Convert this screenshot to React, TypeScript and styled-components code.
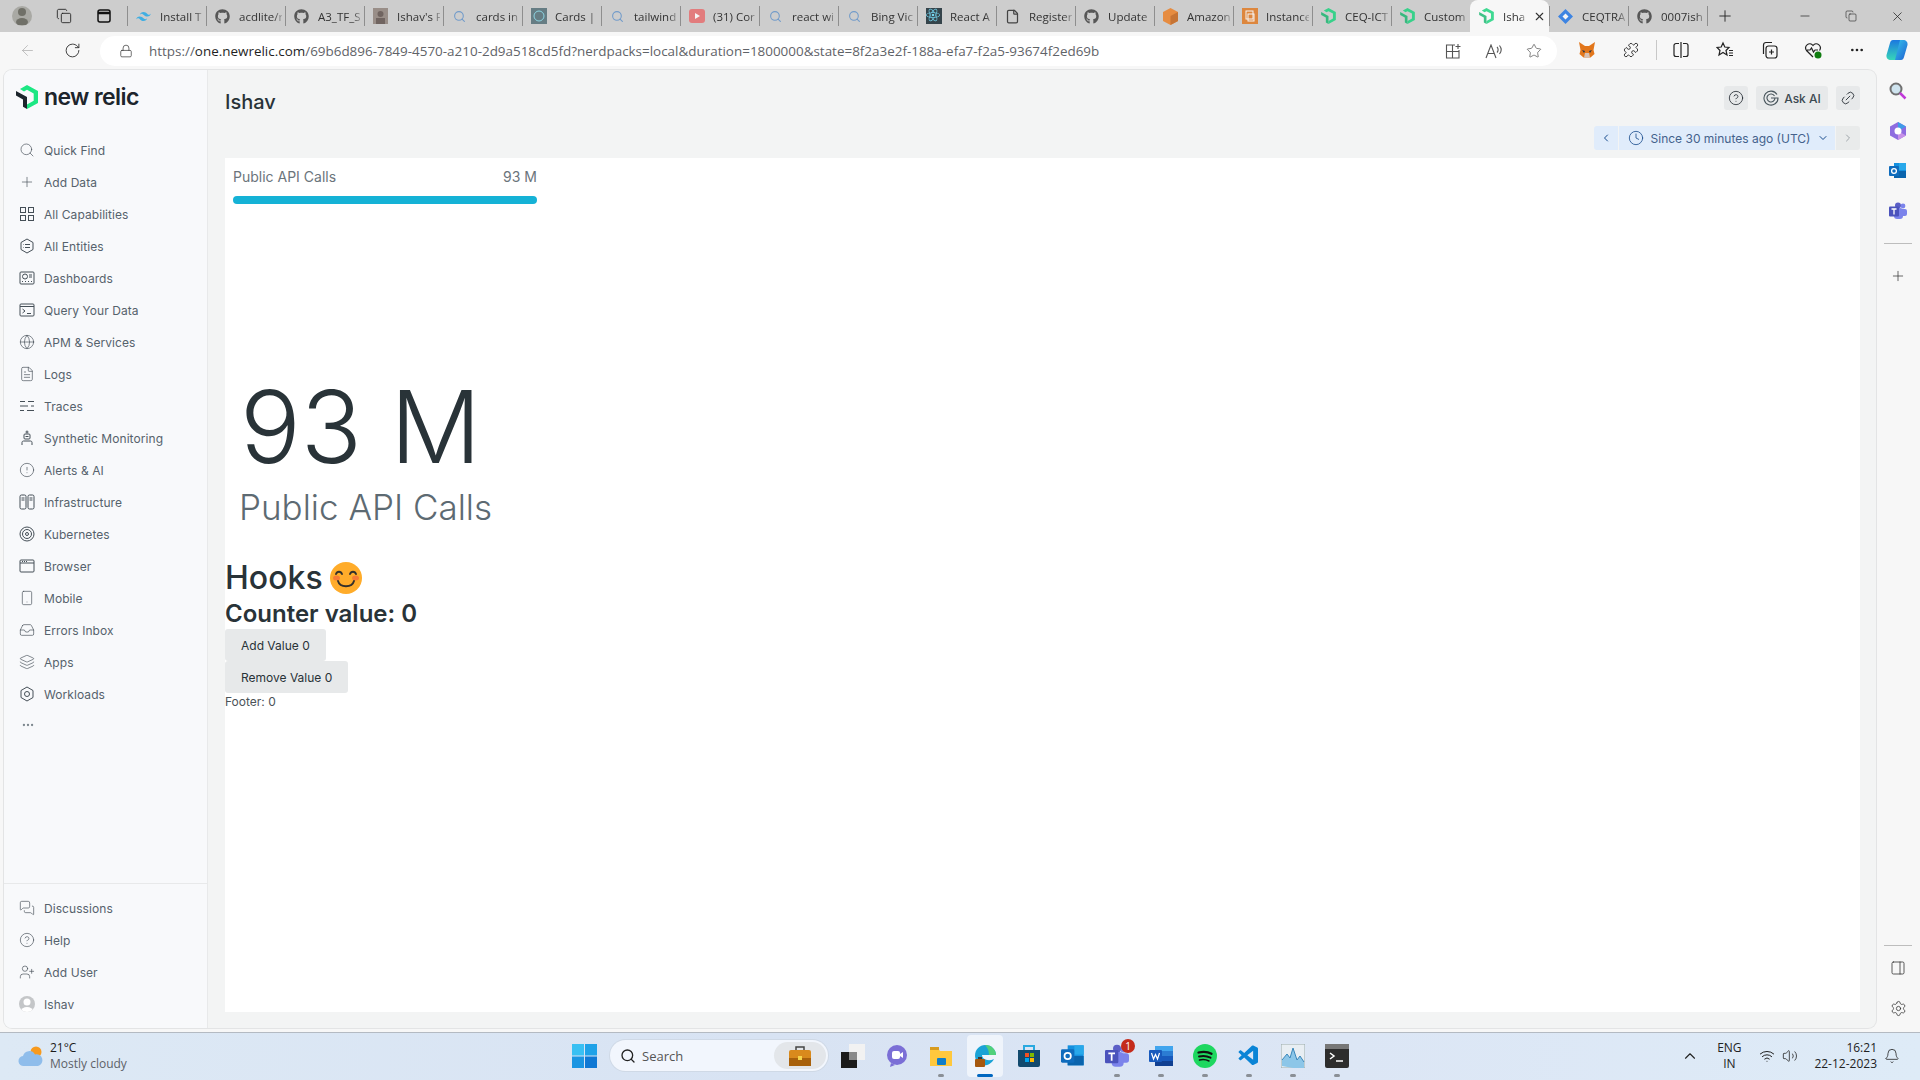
import { FC, ReactNode } from "react";
import styled, { createGlobalStyle } from "styled-components";
import {
  ArrowLeft, RotateCw, Lock, Star, Plus, Minus, Copy, X, Puzzle, MoreHorizontal, Search,
  CircleHelp, Link2, Clock, ChevronLeft, ChevronRight, ChevronDown, ChevronUp, Wifi, Volume2, Bell,
  Settings, PanelRight, Globe, FileText, CircleAlert, Smartphone, Inbox,
  Layers, MessagesSquare, UserPlus, File,
} from "lucide-react";
import { FaGithub } from "react-icons/fa";
import { SiTailwindcss, SiReact } from "react-icons/si";
import { VscVscode } from "react-icons/vsc";

const GlobalStyle = createGlobalStyle`
  html, body { margin: 0; padding: 0; width: 1920px; height: 1080px; overflow: hidden; }
  body { font-family: "Inter", "Liberation Sans", sans-serif; }
  * { box-sizing: border-box; }
`;

const Screen = styled.div`
  width: 1920px;
  height: 1080px;
  display: flex;
  flex-direction: column;
  background: #f7f7f7;
`;

/* browser tabs */
const TitleBar = styled.div`
  height: 32px;
  display: flex;
  align-items: stretch;
  background: #cdcdcd;
`;
const TitleStart = styled.div`
  width: 127px;
  display: flex;
  align-items: center;
  padding-left: 12px;
  gap: 24px;
  color: #222;
`;
const Profile = styled.div`
  width: 20px;
  height: 20px;
  border-radius: 50%;
  background: #a9a9a4;
  display: flex;
  align-items: center;
  justify-content: center;
`;
const TabStrip = styled.div`
  display: flex;
  align-items: stretch;
`;
const Tab = styled.div<{ $active?: boolean }>`
  width: 79px;
  display: flex;
  align-items: center;
  gap: 8px;
  padding: 0 3px 0 8px;
  font-family: "Open Sans", sans-serif;
  font-size: 11.5px;
  color: #333;
  white-space: nowrap;
  position: relative;
  background: ${(p) => (p.$active ? "#f7f7f7" : "transparent")};
  border-radius: ${(p) => (p.$active ? "8px 8px 0 0" : "0")};
  &::before {
    content: "";
    position: absolute;
    left: 0;
    top: 6px;
    bottom: 6px;
    width: 1px;
    background: ${(p) => (p.$active ? "transparent" : "#8e8e8e")};
  }
`;
const TabIcon = styled.span`
  flex: 0 0 17px;
  height: 17px;
  display: flex;
  align-items: center;
  justify-content: center;
  opacity: 0.8;
`;
const TabLabel = styled.span`
  flex: 1;
  min-width: 0;
  overflow: hidden;
  -webkit-mask-image: linear-gradient(90deg, #000 80%, rgba(0, 0, 0, 0.3));
  mask-image: linear-gradient(90deg, #000 80%, rgba(0, 0, 0, 0.3));
`;
const NewTab = styled.div`
  width: 34px;
  display: flex;
  align-items: center;
  justify-content: center;
  color: #222;
  border-left: 1px solid #8e8e8e;
  margin: 6px 0;
`;
const WindowControls = styled.div`
  margin-left: auto;
  display: flex;
  align-items: center;
  color: #222;
`;
const WindowButton = styled.div`
  width: 46px;
  display: flex;
  justify-content: center;
`;

/* address row */
const NavBar = styled.div`
  height: 36px;
  display: flex;
  align-items: center;
  background: #f7f7f7;
  color: #333;
`;
const NavButtons = styled.div`
  width: 100px;
  display: flex;
  align-items: center;
  padding-left: 19px;
  gap: 28px;
`;
const AddressPill = styled.div`
  width: 1457px;
  height: 30px;
  margin-top: 2px;
  border-radius: 15px;
  background: #fff;
  display: flex;
  align-items: center;
  padding: 0 15px 0 19px;
  gap: 16px;
`;
const UrlText = styled.span`
  flex: 1;
  font-family: "Open Sans", sans-serif;
  font-size: 13.45px;
  color: #5f6368;
  white-space: nowrap;
`;
const UrlHost = styled.span`
  color: #1f1f1f;
`;
const PillIcons = styled.div`
  display: flex;
  align-items: center;
  gap: 24px;
  color: #555;
`;
const Extensions = styled.div`
  flex: 1;
  display: flex;
  align-items: center;
  padding-left: 8px;
  color: #222;
`;
const ExtensionSlot = styled.span`
  flex: 0 0 44px;
  display: flex;
  justify-content: center;
`;
const CopilotSlot = styled.span`
  margin-left: 6px;
  display: flex;
`;
const VerticalRule = styled.span`
  flex: 0 0 1px;
  width: 1px;
  height: 20px;
  background: #c8c8c8;
  margin: 0 2px 0 3px;
`;

/* page */
const Workspace = styled.div`
  flex: 1;
  display: flex;
  min-height: 0;
  padding: 2px 0 4px 4px;
`;
const Page = styled.div`
  flex: 1;
  display: flex;
  min-width: 0;
  border-radius: 8px;
  overflow: hidden;
  background: #f3f4f4;
  box-shadow: 0 0 0 1px #e3e4e5;
`;
const Sidebar = styled.nav`
  width: 204px;
  flex-shrink: 0;
  display: flex;
  flex-direction: column;
  background: #f8f9fb;
  border-right: 1px solid #e8e9ea;
`;
const Brand = styled.div`
  height: 64px;
  display: flex;
  align-items: flex-start;
  padding: 15px 0 0 12px;
  gap: 6px;
`;
const BrandName = styled.span`
  font-size: 23px;
  line-height: 24px;
  font-weight: 600;
  letter-spacing: -0.6px;
  color: #1d252c;
`;
const NavList = styled.div`
  display: flex;
  flex-direction: column;
  padding-left: 15px;
`;
const NavRow = styled.div`
  height: 32px;
  display: flex;
  align-items: center;
  gap: 9px;
  font-size: 12px;
  letter-spacing: 0.07px;
  color: #56626c;
  svg {
    color: #454f57;
    flex-shrink: 0;
  }
`;
const MoreDots = styled.div`
  padding: 6px 0 0 2px;
  color: #7d878e;
  height: 32px;
`;
const BottomNav = styled(NavList)`
  margin-top: auto;
  border-top: 1px solid #e8e9ea;
  padding-top: 8px;
  padding-bottom: 8px;
`;
const Avatar = styled.span`
  width: 16px;
  height: 16px;
  border-radius: 50%;
  background: #c4c6c8;
  display: flex;
  align-items: center;
  justify-content: center;
  overflow: hidden;
`;
const Main = styled.main`
  flex: 1;
  min-width: 0;
  display: flex;
  flex-direction: column;
  padding: 0 16px 16px 17px;
`;
const PageHeader = styled.header`
  height: 40px;
  margin-top: 16px;
  display: flex;
  align-items: flex-start;
  justify-content: space-between;
`;
const PageTitle = styled.h2`
  margin: 4px 0 0;
  font-size: 20px;
  line-height: 24px;
  font-weight: 500;
  color: #293338;
`;
const HeaderActions = styled.div`
  display: flex;
  gap: 8px;
`;
const ActionButton = styled.div<{ $wide?: boolean }>`
  height: 24px;
  width: ${(p) => (p.$wide ? "72px" : "24px")};
  border-radius: 3px;
  background: #e7e9ea;
  display: flex;
  align-items: center;
  justify-content: center;
  gap: 5px;
  font-size: 12px;
  font-weight: 500;
  color: #3c4a52;
`;
const TimeRow = styled.div`
  height: 24px;
  display: flex;
  justify-content: flex-end;
  gap: 1px;
`;
const TimeSegment = styled.div<{ $muted?: boolean; $main?: boolean; $round?: "left" | "right" }>`
  height: 24px;
  width: ${(p) => (p.$main ? "216px" : "24px")};
  display: flex;
  align-items: center;
  justify-content: center;
  gap: 7px;
  padding-left: ${(p) => (p.$main ? "3px" : "0")};
  background: ${(p) => (p.$muted ? "#e9ebeb" : "#e0ecfb")};
  color: ${(p) => (p.$muted ? "#9ea5aa" : "#164a8c")};
  border-radius: ${(p) => (p.$round === "left" ? "3px 0 0 3px" : p.$round === "right" ? "0 3px 3px 0" : "0")};
  font-size: 12px;
`;
const TimeLabel = styled.span`
  color: #44628c;
`;
const Panel = styled.section`
  flex: 1;
  margin-top: 8px;
  background: #fff;
`;
const BillboardHead = styled.div`
  width: 320px;
  padding: 10px 8px 0;
  display: flex;
  justify-content: space-between;
  font-size: 14px;
  line-height: 18px;
  color: #6b747b;
`;
const Bar = styled.div`
  width: 304px;
  height: 8px;
  margin: 10px 0 0 8px;
  border-radius: 4px;
  background: #15b2d6;
`;
const Billboard = styled.div`
  margin: 170px 0 0 15px;
`;
const BigValue = styled.div`
  font-size: 101px;
  line-height: 104px;
  font-weight: 300;
  color: #293338;
`;
const BigLabel = styled.div`
  margin: 7px 0 0 -1px;
  font-size: 35px;
  line-height: 44px;
  font-weight: 300;
  color: #5d6a72;
`;
const HooksTitle = styled.h1`
  margin: 30px 0 0;
  display: flex;
  align-items: center;
  gap: 6px;
  font-size: 32px;
  line-height: 38px;
  font-weight: 500;
  color: #293338;
`;
const CounterTitle = styled.h2`
  margin: 1px 0 0;
  font-size: 24px;
  line-height: 31px;
  font-weight: 600;
  color: #293338;
`;
const ButtonStack = styled.div`
  display: flex;
  flex-direction: column;
  align-items: flex-start;
`;
const GrayButton = styled.button`
  height: 32px;
  padding: 0 16px;
  border: 0;
  border-radius: 3px;
  background: #e7e9ea;
  font-family: inherit;
  font-size: 12px;
  color: #293338;
`;
const Footer = styled.div`
  margin-top: 1px;
  font-size: 12px;
  line-height: 16px;
  color: #4b5358;
`;

/* edge rail */
const Rail = styled.aside`
  width: 44px;
  flex-shrink: 0;
  display: flex;
  flex-direction: column;
  align-items: center;
  padding-top: 1px;
  color: #333;
`;
const RailSlot = styled.div`
  height: 40px;
  display: flex;
  align-items: center;
  justify-content: center;
`;
const RailDivider = styled.div<{ $tight?: boolean }>`
  width: 28px;
  height: 1px;
  margin: ${(p) => (p.$tight ? "0 0 2px" : "12px 0")};
  background: #bdbdbd;
`;
const RailBottom = styled.div`
  margin-top: auto;
  display: flex;
  flex-direction: column;
  align-items: center;
`;

/* taskbar */
const Taskbar = styled.footer`
  height: 48px;
  display: flex;
  align-items: center;
  padding-bottom: 2px;
  border-top: 1px solid #b4bac2;
  background: linear-gradient(90deg, #dde9f5, #d8e3f3 40%, #dce6f5 70%, #deebf7);
`;
const Weather = styled.div`
  width: 572px;
  display: flex;
  align-items: center;
  padding-left: 18px;
  gap: 6px;
  font-family: "Open Sans", sans-serif;
  font-size: 12px;
  line-height: 16px;
  color: #1b1b1b;
`;
const WeatherText = styled.span`
  color: #5d6268;
`;
const TaskCenter = styled.div`
  display: flex;
  align-items: center;
`;
const StartSlot = styled.div`
  width: 38px;
  display: flex;
`;
const SearchPill = styled.div`
  width: 218px;
  height: 31px;
  border-radius: 16px;
  background: #f2f6fd;
  box-shadow: 0 0 0 1px #cfd9e6;
  display: flex;
  align-items: center;
  padding: 0 2px 0 10px;
  gap: 6px;
  font-family: "Open Sans", sans-serif;
  font-size: 13px;
  color: #555;
`;
const SearchBadge = styled.span`
  margin-left: auto;
  width: 52px;
  height: 27px;
  border-radius: 14px;
  background: #e3e6ea;
  display: flex;
  align-items: center;
  justify-content: center;
`;
const TaskApps = styled.div`
  display: flex;
  margin-left: 3px;
`;
const TaskApp = styled.div<{ $active?: boolean; $running?: boolean }>`
  width: 44px;
  height: 42px;
  position: relative;
  display: flex;
  align-items: center;
  justify-content: center;
  &::before {
    content: "";
    position: absolute;
    left: 4px;
    right: 4px;
    top: 0;
    bottom: 0;
    border-radius: 4px;
    background: ${(p) => (p.$active ? "#eff4fb" : "transparent")};
  }
  &::after {
    content: "";
    position: absolute;
    left: 50%;
    bottom: 0;
    transform: translateX(-50%);
    width: ${(p) => (p.$active ? "16px" : "6px")};
    height: 3px;
    border-radius: 2px;
    background: ${(p) => (p.$active ? "#0067c0" : p.$running ? "#8a8f96" : "transparent")};
  }
  > * {
    position: relative;
  }
`;
const Badge = styled.span`
  position: absolute;
  top: 4px;
  right: 4px;
  width: 14px;
  height: 14px;
  border-radius: 50%;
  background: #c42b1c;
  color: #fff;
  font-size: 10px;
  line-height: 14px;
  text-align: center;
  font-family: "Open Sans", sans-serif;
`;
const Tray = styled.div`
  margin-left: auto;
  display: flex;
  align-items: center;
  color: #222;
  font-family: "Open Sans", sans-serif;
  font-size: 12px;
  line-height: 16px;
`;
const Lang = styled.div`
  width: 40px;
  margin: 0 10px 0 10px;
  text-align: center;
`;
const TrayIcons = styled.div`
  display: flex;
  gap: 7px;
  align-items: center;
`;
const ClockText = styled.div`
  margin-left: 16px;
  text-align: right;
  font-size: 12px;
`;
const BellSlot = styled.div`
  width: 43px;
  padding-right: 13px;
  display: flex;
  justify-content: center;
`;

const Line: FC<{ children: ReactNode; size?: number }> = ({ children, size = 16 }) => (
  <svg width={size} height={size} viewBox="0 0 16 16" fill="none" stroke="currentColor" strokeWidth={1}>
    {children}
  </svg>
);

const NrMark = () => (
  <svg width="22" height="24" viewBox="0 0 22 24">
    <path d="M4 3.900 11 0l11 6v12l-11 6v-4.600l6.700-3.700V8.400L11 4.700 8 6.400z" fill="#1ce783" />
    <path d="M0 6 11 12v12l-4-2.200v-7.400L0 10.600z" fill="#1d252c" />
  </svg>
);

const SmallMark = () => (
  <svg width="15" height="16" viewBox="0 0 22 24">
    <path d="M4 3.900 11 0l11 6v12l-11 6v-4.600l6.700-3.700V8.400L11 4.700 8 6.400z" fill="#12d27a" />
    <path d="M0 6 11 12v12l-4-2.200v-7.400L0 10.600z" fill="#12b56c" />
  </svg>
);

const Outlook: FC<{ size?: number }> = ({ size = 18 }) => (
  <svg width={size} height={size} viewBox="0 0 18 18">
    <rect x="5" y="1" width="12" height="15" fill="#1490df" />
    <rect x="10" y="1" width="7" height="7" fill="#28a8ea" />
    <rect x="5" y="9" width="12" height="7" fill="#0a64ad" />
    <rect x="0" y="4" width="10" height="10" rx="1" fill="#0f6cbd" />
    <circle cx="5" cy="9" r="2.400" fill="none" stroke="#fff" strokeWidth="1.300" />
  </svg>
);

const Teams: FC<{ size?: number }> = ({ size = 18 }) => (
  <svg width={size} height={size} viewBox="0 0 18 18">
    <circle cx="14" cy="4" r="2.400" fill="#7b83eb" />
    <rect x="10" y="7" width="8" height="7" rx="2" fill="#7b83eb" />
    <circle cx="9" cy="3.500" r="3" fill="#5b5fc7" />
    <rect x="5" y="6" width="9" height="11" rx="3" fill="#7b83eb" />
    <rect x="0" y="4.500" width="10" height="10" rx="1" fill="#4b53bc" />
    <path d="M2.500 7h5M5 7v5.500" stroke="#fff" strokeWidth="1.300" />
  </svg>
);

const Word = () => (
  <svg width="24" height="24" viewBox="0 0 24 24">
    <rect x="6" y="2" width="18" height="5" fill="#41a5ee" />
    <rect x="6" y="7" width="18" height="5" fill="#2b7cd3" />
    <rect x="6" y="12" width="18" height="5" fill="#185abd" />
    <rect x="6" y="17" width="18" height="5" fill="#103f91" />
    <rect x="0" y="6" width="13" height="12" rx="1" fill="#185abd" />
    <path d="M2.500 9 4.500 15 6.500 10.500 8.500 15 10.500 9" stroke="#fff" strokeWidth="1.200" fill="none" />
  </svg>
);

const Fox = () => (
  <svg width="18" height="18" viewBox="0 0 18 18">
    <path d="M1 1l6 4h4l6-4-1.500 8 1 4-4 3.500h-7L1.500 13l1-4z" fill="#e2761b" />
    <path d="M6 16.500 7 12h4l1 4.500z" fill="#d7c1b3" />
    <path d="M4 9l3 1-1 2zM14 9l-3 1 1 2z" fill="#233447" />
  </svg>
);

const CopilotMark = () => (
  <svg width="24" height="24" viewBox="0 0 24 24">
    <defs>
      <linearGradient id="copilotA" x1="0" y1="0" x2="0" y2="1">
        <stop offset="0" stopColor="#1b78e0" />
        <stop offset="1" stopColor="#37d6b8" />
      </linearGradient>
      <linearGradient id="copilotB" x1="0" y1="0" x2="1" y2="1">
        <stop offset="0" stopColor="#35c6ee" />
        <stop offset="1" stopColor="#1f5fd0" />
      </linearGradient>
    </defs>
    <path d="M8 2h8L11 22H6C3 22 1 20 1.500 17L5 5c.4-2 1.500-3 3-3z" fill="url(#copilotA)" />
    <path d="M15 2h3c3 0 5 2 4.500 5L19 19c-.4 2-1.500 3-3 3h-6z" fill="url(#copilotB)" />
  </svg>
);

const SplitScreen = () => (
  <svg width="16" height="16" viewBox="0 0 16 16" fill="none" stroke="currentColor" strokeWidth="1.200">
    <path d="M6 1.500H3a2 2 0 0 0-2 2v9a2 2 0 0 0 2 2h3M10 1.500h3a2 2 0 0 1 2 2v9a2 2 0 0 1-2 2h-3M8 0v16" />
  </svg>
);

const Smile = () => (
  <svg width="34" height="34" viewBox="0 0 34 34">
    <circle cx="17" cy="17" r="16" fill="#ffac2a" />
    <ellipse cx="7.500" cy="17" rx="3.500" ry="2.500" fill="#f4713a" opacity=".8" />
    <ellipse cx="26.500" cy="17" rx="3.500" ry="2.500" fill="#f4713a" opacity=".8" />
    <path d="M7 13c1-3 5-3 6 0M21 13c1-3 5-3 6 0M9 20c2 7 14 7 16 0" fill="none" stroke="#33302c" strokeWidth="1.900" strokeLinecap="round" />
  </svg>
);

const SearchFav = () => <Search size={13} color="#5b8fc9" />;
const Ghub = () => <FaGithub size={15} color="#3a3a3a" />;

const tabs: { icon: ReactNode; label: string }[] = [
  { icon: <SiTailwindcss size={15} color="#1ea7e8" />, label: "Install T" },
  { icon: <Ghub />, label: "acdlite/r" },
  { icon: <Ghub />, label: "A3_TF_S" },
  { icon: <svg width="15" height="16"><rect width="15" height="16" fill="#8d7f78" /><circle cx="7.500" cy="6" r="3" fill="#5a4a45" /><rect x="3" y="10" width="9" height="6" fill="#5a4a45" /></svg>, label: "Ishav's F" },
  { icon: <SearchFav />, label: "cards in" },
  { icon: <svg width="16" height="16"><rect width="16" height="16" fill="#4d6a72" /><circle cx="8" cy="8" r="5" fill="none" stroke="#7fd8ea" /></svg>, label: "Cards | F" },
  { icon: <SearchFav />, label: "tailwind" },
  { icon: <svg width="16" height="14"><rect width="16" height="14" rx="3" fill="#e8686a" /><path d="M6 4l5 3-5 3z" fill="#fff" /></svg>, label: "(31) Cor" },
  { icon: <SearchFav />, label: "react wi" },
  { icon: <SearchFav />, label: "Bing Vic" },
  { icon: <svg width="16" height="16"><rect width="16" height="16" fill="#10222b" /><foreignObject width="16" height="16"><SiReact size={14} color="#61dafb" /></foreignObject></svg>, label: "React A" },
  { icon: <File size={15} color="#222" />, label: "Register" },
  { icon: <Ghub />, label: "Update" },
  { icon: <svg width="15" height="17" viewBox="0 0 15 17"><path d="M7.500 0 15 4v9l-7.500 4L0 13V4z" fill="#ed7d1f" /><path d="M7.500 8 15 4v9l-7.500 4z" fill="#c55f10" /></svg>, label: "Amazon" },
  { icon: <svg width="16" height="16"><rect width="16" height="16" fill="#e2761b" /><rect x="4" y="3" width="7" height="8" fill="none" stroke="#fff" /><rect x="6" y="6" width="6" height="7" fill="none" stroke="#fff" /></svg>, label: "Instance" },
  { icon: <SmallMark />, label: "CEQ-ICT" },
  { icon: <SmallMark />, label: "Custom" },
];

const sideTop: { icon: ReactNode; label: string }[] = [
  { icon: <Search size={16} strokeWidth={1} />, label: "Quick Find" },
  { icon: <Plus size={16} strokeWidth={1} />, label: "Add Data" },
  { icon: <Line><rect x="1.500" y="1.500" width="5" height="5" /><rect x="9.500" y="1.500" width="5" height="5" /><rect x="1.500" y="9.500" width="5" height="5" /><rect x="9.500" y="9.500" width="5" height="5" /></Line>, label: "All Capabilities" },
  { icon: <Line><path d="M8 1l6 3.500v7L8 15l-6-3.500v-7z" /><path d="M6 6.500h5M6 9.500h5M4.500 6.500h.5M4.500 9.500h.5" /></Line>, label: "All Entities" },
  { icon: <Line><rect x="1" y="2" width="14" height="12" rx="1" /><circle cx="6" cy="6.500" r="2.500" /><path d="M10 5h3M10 7h3M3 11.500h1M6 11.500h1M9 11.500h1M12 11.500h1" /></Line>, label: "Dashboards" },
  { icon: <Line><rect x="1" y="2" width="14" height="12" rx="1" /><path d="M1 4.500h14M3.500 7l2.500 2-2.500 2M8 11.500h4" /></Line>, label: "Query Your Data" },
  { icon: <Globe size={16} strokeWidth={1} />, label: "APM & Services" },
  { icon: <FileText size={16} strokeWidth={1} />, label: "Logs" },
  { icon: <Line><path d="M1 3.500h5M9 3.500h6M1 8h8M12 8h3M1 12.500h4M8 12.500h7" /></Line>, label: "Traces" },
  { icon: <Line><rect x="5" y="4" width="6" height="5" rx="1" /><circle cx="8" cy="2" r="1" /><path d="M6.500 6.500h3M3 15v-2.500c0-1 .8-1.500 1.500-1.500h7c.8 0 1.500.5 1.500 1.500V15" /></Line>, label: "Synthetic Monitoring" },
  { icon: <CircleAlert size={16} strokeWidth={1} />, label: "Alerts & AI" },
  { icon: <Line><rect x="1" y="1" width="6" height="14" rx="1.500" /><rect x="9" y="1" width="6" height="14" rx="1.500" /><path d="M2.500 4h3M10.500 4h3M2.500 6h3M10.500 6h3" /></Line>, label: "Infrastructure" },
  { icon: <Line><circle cx="8" cy="8" r="7" /><circle cx="8" cy="8" r="4.500" /><circle cx="8" cy="8" r="1.500" /></Line>, label: "Kubernetes" },
  { icon: <Line><rect x="1" y="2" width="14" height="12" rx="1" /><path d="M1 5h14M3 3.500h1M5 3.500h1M7 3.500h1" /></Line>, label: "Browser" },
  { icon: <Smartphone size={16} strokeWidth={1} />, label: "Mobile" },
  { icon: <Inbox size={16} strokeWidth={1} />, label: "Errors Inbox" },
  { icon: <Layers size={16} strokeWidth={1} />, label: "Apps" },
  { icon: <Line><path d="M8 1l6 3.500v7L8 15l-6-3.500v-7z" /><circle cx="8" cy="8" r="2.500" /></Line>, label: "Workloads" },
];

const taskApps: { icon: ReactNode; running?: boolean; active?: boolean; badge?: string }[] = [
  { icon: <svg width="24" height="24"><rect x="0" y="8" width="16" height="16" fill="#1b1b1b" /><rect x="8" y="0" width="16" height="16" fill="#f2f2f2" /><rect x="8" y="8" width="8" height="8" fill="#8a8a8a" /></svg> },
  { icon: <svg width="24" height="24"><circle cx="12" cy="11" r="10" fill="#7b6fd6" /><path d="M6 19l-1 4 5-2z" fill="#7b6fd6" /><rect x="7" y="7" width="8" height="8" rx="2" fill="#fff" /><path d="M15 10l3-2v6l-3-2z" fill="#fff" /></svg> },
  { icon: <svg width="24" height="24"><path d="M1 4h8l2 3h12v15H1z" fill="#ffc83d" /><rect x="1" y="3" width="9" height="3" fill="#d89b1e" /><rect x="8" y="14" width="9" height="7" rx="1" fill="#0f7ec9" /></svg>, running: true },
  { icon: <svg width="24" height="24"><path d="M2 12C2 5 7 1 12 1c7 0 11 5 11 10H9c0 4 6 7 12 4-3 6-10 8-14 5C4 18 2 15 2 12z" fill="#1ba3d6" /><path d="M12 1c7 0 11 5 11 10h-7C16 6 14 3 12 1z" fill="#52d17a" /><rect x="2" y="15" width="10" height="8" rx="1" fill="#a5580f" /><rect x="5" y="13" width="4" height="2" fill="#3a3a3a" /></svg>, active: true },
  { icon: <svg width="24" height="24"><path d="M1 6h22v15a2 2 0 0 1-2 2H3a2 2 0 0 1-2-2z" fill="#124a6e" /><path d="M7 6V2h10v4" fill="none" stroke="#29a9e0" strokeWidth="2" /><rect x="8" y="9" width="4" height="4" fill="#f25022" /><rect x="13" y="9" width="4" height="4" fill="#7fba00" /><rect x="8" y="14" width="4" height="4" fill="#00a4ef" /><rect x="13" y="14" width="4" height="4" fill="#ffb900" /></svg> },
  { icon: <Outlook size={24} /> },
  { icon: <Teams size={24} />, running: true, badge: "1" },
  { icon: <Word />, running: true },
  { icon: <svg width="24" height="24" fill="none" stroke="#111" strokeLinecap="round"><circle cx="12" cy="12" r="12" fill="#1ed760" stroke="none" /><path d="M5.500 8.500c4-1 9-1 13 1.200" strokeWidth="2.300" /><path d="M6 12.500c3.500-.9 8-.6 11.500 1.200" strokeWidth="1.900" /><path d="M6.500 16c3-.7 6.500-.5 9.500 1" strokeWidth="1.500" /></svg>, running: true },
  { icon: <VscVscode size={24} color="#0a84d6" />, running: true },
  { icon: <svg width="24" height="24"><rect width="24" height="24" fill="#e8eef3" stroke="#9aa" /><path d="M1 22V16L6 10l3 4 3-10 4 12 3-4 4 6v8z" fill="#8cc6e8" /><path d="M1 16 6 10l3 4 3-10 4 12 3-4 4 6" fill="none" stroke="#3a87bb" /></svg>, running: true },
  { icon: <svg width="24" height="24"><rect width="24" height="24" rx="2" fill="#2d2d2d" /><rect width="24" height="5" fill="#777" /><path d="M5 9l4 3-4 3M11 17h7" stroke="#fff" fill="none" strokeWidth="1.500" /></svg>, running: true },
];

const App: FC = () => (
  <Screen>
    <GlobalStyle />
    <TitleBar>
      <TitleStart>
        <Profile>
          <svg width="14" height="18" viewBox="0 0 14 18" fill="#707068"><circle cx="7" cy="5" r="4" /><ellipse cx="7" cy="15" rx="6" ry="4" /></svg>
        </Profile>
        <Copy size={16} strokeWidth={1.300} />
        <svg width="16" height="16" viewBox="0 0 16 16" fill="none" stroke="#111" strokeWidth="1.500"><rect x="2" y="2" width="12" height="12" rx="2" /><path d="M2 5h12" strokeWidth="2.500" /></svg>
      </TitleStart>
      <TabStrip>
        {tabs.map((t) => (
          <Tab key={t.label}>
            <TabIcon>{t.icon}</TabIcon>
            <TabLabel>{t.label}</TabLabel>
          </Tab>
        ))}
        <Tab $active>
          <TabIcon><SmallMark /></TabIcon>
          <TabLabel>Isha</TabLabel>
          <X size={13} />
        </Tab>
        <Tab>
          <TabIcon><svg width="15" height="15" viewBox="0 0 15 15"><path d="M7.500 0 15 7.500 7.500 15 0 7.500z" fill="#1a73e8" /><path d="M7.500 4.500 10.500 7.500 7.500 10.500 4.500 7.500z" fill="#fff" /></svg></TabIcon>
          <TabLabel>CEQTRA</TabLabel>
        </Tab>
        <Tab>
          <TabIcon><Ghub /></TabIcon>
          <TabLabel>0007ish</TabLabel>
        </Tab>
        <NewTab><Plus size={18} strokeWidth={1.200} /></NewTab>
      </TabStrip>
      <WindowControls>
        <WindowButton><Minus size={14} strokeWidth={1.200} /></WindowButton>
        <WindowButton><Copy size={12} strokeWidth={1.200} /></WindowButton>
        <WindowButton><X size={15} strokeWidth={1.200} /></WindowButton>
      </WindowControls>
    </TitleBar>

    <NavBar>
      <NavButtons>
        <ArrowLeft size={17} strokeWidth={1} color="#aaa" />
        <RotateCw size={17} strokeWidth={1.300} />
      </NavButtons>
      <AddressPill>
        <Lock size={14} strokeWidth={1.200} />
        <UrlText>
          https://<UrlHost>one.newrelic.com</UrlHost>/69b6d896-7849-4570-a210-2d9a518cd5fd?nerdpacks=local&amp;duration=1800000&amp;state=8f2a3e2f-188a-efa7-f2a5-93674f2ed69b
        </UrlText>
        <PillIcons>
          <svg width="16" height="16" viewBox="0 0 16 16" fill="none" stroke="currentColor" strokeWidth="1.100"><path d="M10 2H1.500v13H14V7M1.500 8.500H14M7.500 2v13M13 1v5M10.500 3.500h5" /></svg>
          <svg width="17" height="15" viewBox="0 0 17 15" fill="none" stroke="currentColor" strokeWidth="1.100"><path d="M1 14 6 1l5 13M3 9.500h6M12 3c1.500 1.500 1.500 4 0 5.500M14.500 1.500c2 2.500 2 6 0 8.500" /></svg>
          <Star size={16} strokeWidth={1.100} />
        </PillIcons>
      </AddressPill>
      <Extensions>
        <ExtensionSlot><Fox /></ExtensionSlot>
        <ExtensionSlot><Puzzle size={16} strokeWidth={1.300} /></ExtensionSlot>
        <VerticalRule />
        <ExtensionSlot><SplitScreen /></ExtensionSlot>
        <ExtensionSlot>
          <svg width="18" height="18" viewBox="0 0 18 18" fill="none" stroke="#222" strokeWidth="1.200"><path d="M7 2 8.800 6 13 6.500 10 9.500 11 14 7 11.500 3 14 4 9.500 1 6.500 5.200 6zM13 9.500h4M13 12h4M13 14.500h4" /></svg>
        </ExtensionSlot>
        <ExtensionSlot>
          <svg width="18" height="18" viewBox="0 0 18 18" fill="none" stroke="#222" strokeWidth="1.200"><rect x="6" y="5" width="11" height="12" rx="2.500" /><path d="M11.500 8.500v5M9 11h5M3.500 13V4a2.500 2.500 0 0 1 2.500-2.500h6" /></svg>
        </ExtensionSlot>
        <ExtensionSlot>
          <svg width="18" height="18" viewBox="0 0 18 18" fill="none" stroke="#222" strokeWidth="1.200"><path d="M9 16 2.500 9.500C-.5 5 5.500 0 9 4.500 12.500 0 18.500 5 15.500 9.500M3 9h3l1.500-2 2 4L11 9h3" /><circle cx="14" cy="14" r="3.500" fill="#107c10" stroke="none" /></svg>
        </ExtensionSlot>
        <ExtensionSlot><MoreHorizontal size={16} /></ExtensionSlot>
        <CopilotSlot><CopilotMark /></CopilotSlot>
      </Extensions>
    </NavBar>

    <Workspace>
      <Page>
        <Sidebar>
          <Brand>
            <NrMark />
            <BrandName>new relic</BrandName>
          </Brand>
          <NavList>
            {sideTop.map((item) => (
              <NavRow key={item.label}>
                {item.icon}
                <span>{item.label}</span>
              </NavRow>
            ))}
            <MoreDots>
              <MoreHorizontal size={14} />
            </MoreDots>
          </NavList>
          <BottomNav>
            <NavRow><MessagesSquare size={16} strokeWidth={1} /><span>Discussions</span></NavRow>
            <NavRow><CircleHelp size={16} strokeWidth={1} /><span>Help</span></NavRow>
            <NavRow><UserPlus size={16} strokeWidth={1} /><span>Add User</span></NavRow>
            <NavRow>
              <Avatar>
                <svg width="16" height="16" viewBox="0 0 16 16" fill="#fff"><circle cx="8" cy="6" r="3.500" /><ellipse cx="8" cy="15" rx="6" ry="4" /></svg>
              </Avatar>
              <span>Ishav</span>
            </NavRow>
          </BottomNav>
        </Sidebar>
        <Main>
          <PageHeader>
            <PageTitle>Ishav</PageTitle>
            <HeaderActions>
              <ActionButton><CircleHelp size={16} strokeWidth={1.200} color="#1d252c" /></ActionButton>
              <ActionButton $wide>
                <svg width="16" height="16" viewBox="0 0 16 16" fill="none" stroke="#48555c" strokeWidth="1.100"><path d="M14 4.500A7 7 0 1 0 15 8h-3M11.500 6A4 4 0 1 0 12 8H8" /></svg>
                Ask AI
              </ActionButton>
              <ActionButton><Link2 size={16} strokeWidth={1.200} color="#1d252c" style={{ transform: "rotate(-45deg)" }} /></ActionButton>
            </HeaderActions>
          </PageHeader>
          <TimeRow>
            <TimeSegment $round="left"><ChevronLeft size={12} strokeWidth={2} /></TimeSegment>
            <TimeSegment $main>
              <Clock size={16} strokeWidth={1.200} />
              <TimeLabel>Since 30 minutes ago (UTC)</TimeLabel>
              <ChevronDown size={12} strokeWidth={2} />
            </TimeSegment>
            <TimeSegment $muted $round="right"><ChevronRight size={12} strokeWidth={2} /></TimeSegment>
          </TimeRow>
          <Panel>
            <BillboardHead>
              <span>Public API Calls</span>
              <span>93 M</span>
            </BillboardHead>
            <Bar />
            <Billboard>
              <BigValue>93 M</BigValue>
              <BigLabel>Public API Calls</BigLabel>
            </Billboard>
            <HooksTitle>Hooks <Smile /></HooksTitle>
            <CounterTitle>Counter value: 0</CounterTitle>
            <ButtonStack>
              <GrayButton>Add Value 0</GrayButton>
              <GrayButton>Remove Value 0</GrayButton>
            </ButtonStack>
            <Footer>Footer: 0</Footer>
          </Panel>
        </Main>
      </Page>
      <Rail>
        <RailSlot>
          <svg width="18" height="18" viewBox="0 0 18 18" fill="none"><circle cx="7" cy="7" r="5.500" stroke="#707070" strokeWidth="2" fill="#cfe4ef" /><path d="M11 11l5.500 5.500" stroke="#c03ad8" strokeWidth="2.500" /></svg>
        </RailSlot>
        <RailSlot>
          <svg width="18" height="18" viewBox="0 0 18 18"><path d="M9 0 17 4.500v9L9 18 1 13.500v-9z" fill="#8e6ce0" /><path d="M9 0 17 4.500 9 9z" fill="#3f9be8" /><path d="M17 13.500 9 18V9z" fill="#c792e8" /><circle cx="9" cy="9" r="3.500" fill="#fff" /></svg>
        </RailSlot>
        <RailSlot><Outlook /></RailSlot>
        <RailSlot><Teams /></RailSlot>
        <RailDivider />
        <RailSlot><Plus size={16} strokeWidth={1.100} /></RailSlot>
        <RailBottom>
          <RailDivider $tight />
          <RailSlot><PanelRight size={16} strokeWidth={1.200} /></RailSlot>
          <RailSlot><Settings size={17} strokeWidth={1.100} /></RailSlot>
        </RailBottom>
      </Rail>
    </Workspace>

    <Taskbar>
      <Weather>
        <svg width="26" height="22" viewBox="0 0 26 22"><circle cx="18" cy="7" r="5.500" fill="#f79a1e" /><path d="M6 21a5 5 0 0 1-1-10 6.500 6.500 0 0 1 12-1.500A5.500 5.500 0 0 1 20 21z" fill="#8fbdeb" /></svg>
        <div>
          <div>21°C</div>
          <WeatherText>Mostly cloudy</WeatherText>
        </div>
      </Weather>
      <TaskCenter>
        <StartSlot>
          <svg width="25" height="24" viewBox="0 0 25 24"><rect width="12" height="11.500" fill="#39c0f3" /><rect x="13" width="12" height="11.500" fill="#1fa2e8" /><rect y="12.500" width="12" height="11.500" fill="#1a95e2" /><rect x="13" y="12.500" width="12" height="11.500" fill="#0f78d4" /></svg>
        </StartSlot>
        <SearchPill>
          <Search size={16} color="#222" />
          Search
          <SearchBadge>
            <svg width="22" height="22" viewBox="0 0 22 22"><path d="M7 5V2h8v3" fill="none" stroke="#444" strokeWidth="1.500" /><rect y="5" width="22" height="16" rx="2" fill="#d98a1c" /><rect y="13" width="22" height="8" fill="#a8610c" /><rect x="9" y="11" width="4" height="4" fill="#f5d44a" /></svg>
          </SearchBadge>
        </SearchPill>
        <TaskApps>
          {taskApps.map((app, i) => (
            <TaskApp key={i} $active={app.active} $running={app.running}>
              {app.icon}
              {app.badge && <Badge>{app.badge}</Badge>}
            </TaskApp>
          ))}
        </TaskApps>
      </TaskCenter>
      <Tray>
        <ChevronUp size={18} strokeWidth={1.500} />
        <Lang>ENG<br />IN</Lang>
        <TrayIcons>
          <Wifi size={16} strokeWidth={1.500} />
          <Volume2 size={16} strokeWidth={1.200} />
        </TrayIcons>
        <ClockText>16:21<br />22-12-2023</ClockText>
        <BellSlot><Bell size={16} strokeWidth={1.200} /></BellSlot>
      </Tray>
    </Taskbar>
  </Screen>
);

export default App;
